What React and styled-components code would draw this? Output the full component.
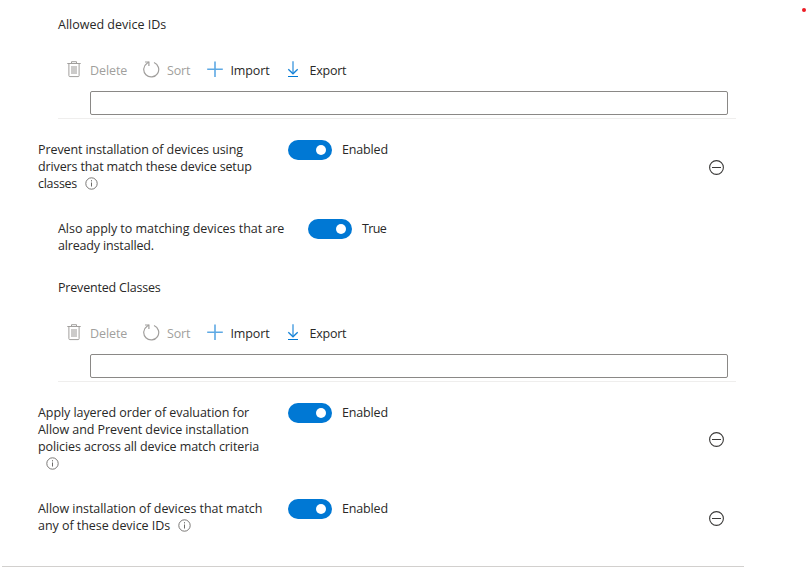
import React from 'react';
import styled, { createGlobalStyle } from 'styled-components';

const GlobalStyle = createGlobalStyle`
  * { box-sizing: border-box; }
  body { margin: 0; background: #fff; overflow: hidden; }
`;

const Page = styled.main`
  position: relative;
  width: 807px;
  height: 574px;
  padding-top: 16px;
  overflow: hidden;
  background: #fff;
  color: #292827;
  font-family: 'Open Sans', 'Noto Sans', sans-serif;
  font-size: 12.5px;
  line-height: 17px;
`;

const Panel = styled.div`
  display: flex;
  flex-direction: column;
  width: 744px;
`;

const ListSection = styled.section`
  width: 678px;
  height: 103px;
  margin-top: ${(p) => p.$gap || 0}px;
  margin-left: 58px;
  border-bottom: 1px solid #efeeed;
`;

const Line = styled.span`
  display: block;
  height: 17px;
  white-space: nowrap;
  letter-spacing: ${(p) => p.$track || 0}px;
`;

const Toolbar = styled.div`
  display: flex;
  align-items: center;
  height: 20px;
  margin-top: 27px;
  padding-left: 7px;
`;

const Command = styled.button`
  display: flex;
  align-items: center;
  width: ${(p) => p.$width}px;
  height: 20px;
  padding: 0;
  border: 0;
  background: none;
  font: inherit;
  color: ${(p) => (p.disabled ? '#a19f9d' : '#292827')};
`;

const CommandIcon = styled.span`
  display: flex;
  flex: none;
  width: ${(p) => p.$width}px;
  height: 18px;
`;

const ListInput = styled.input`
  display: block;
  width: 638px;
  height: 24px;
  margin: 11px 0 0 32px;
  border: 1px solid #8a8886;
  border-radius: 2px;
  outline: 0;
`;

const SettingRow = styled.div`
  display: flex;
  width: 736px;
  height: ${(p) => p.$height}px;
  margin-top: ${(p) => p.$gap}px;
  padding-left: ${(p) => (p.$nested ? 58 : 38)}px;
`;

const Label = styled.div`
  flex: none;
  width: 250px;
  padding-top: 1px;
`;

const InfoSvg = styled.svg`
  display: inline-block;
  width: 13px;
  height: 13px;
  margin-left: 8px;
  vertical-align: -2px;
`;

const Switch = styled.button`
  display: flex;
  align-items: center;
  justify-content: flex-end;
  flex: none;
  width: 44px;
  height: 20px;
  padding: 0 6px 0 0;
  border: 0;
  border-radius: 10px;
  background: #0078d4;
`;

const Knob = styled.span`
  width: 10px;
  height: 10px;
  border-radius: 50%;
  background: #fff;
`;

const State = styled.div`
  margin-left: 10px;
  padding-top: 1px;
`;

const RemoveButton = styled.button`
  display: flex;
  align-self: center;
  width: 17px;
  height: 17px;
  margin: 0 11px 0 auto;
  padding: 0;
  border: 0;
  background: none;
`;

const Rule = styled.hr`
  width: 742px;
  height: 1px;
  margin: 29px 0 0 2px;
  border: 0;
  background: #d2d0ce;
`;

const Marker = styled.span`
  position: absolute;
  top: 8px;
  left: 802px;
  width: 4px;
  height: 4px;
  border-radius: 50%;
  background: #ed1c24;
`;

const TrashIcon = () => (
  <svg width="18" height="18" viewBox="0 0 18 18" fill="none" stroke="#a19f9d">
    <path d="M2.3 2.5h13.4M6.5 2.5V.7h5v1.8" />
    <path d="M3.9 3v11.7c0 .6.3.9.9.9h8.4c.6 0 .9-.3.9-.9V3" />
    <path d="M6 5h6v8H6z" fill="#cccbca" stroke="none" />
  </svg>
);

const SortIcon = () => (
  <svg width="18" height="18" viewBox="0 0 18 18" fill="none" stroke="#a19f9d" strokeWidth="1.2">
    <path d="M12 1.5A7.5 7.5 0 1 1 5.1 2.2L6.9 1.1" />
    <path d="M3 1h3.9v3.9" />
  </svg>
);

const PlusIcon = () => (
  <svg width="18" height="18" viewBox="0 0 18 18" fill="none" stroke="#5ea9e4" strokeWidth="1.6">
    <path d="M8 .5v15.5M.2 8.2h15.6" />
  </svg>
);

const ExportIcon = () => (
  <svg width="14" height="18" viewBox="0 0 14 18" fill="none">
    <path d="M7 .2v12.3" stroke="#5ea9e4" strokeWidth="1.6" />
    <path d="M2.3 8.2L7 12.8l4.7-4.6" stroke="#1683d8" strokeWidth="1.3" />
    <path d="M2 15.5h10" stroke="#0078d4" />
  </svg>
);

const InfoIcon = () => (
  <InfoSvg viewBox="0 0 13 13" fill="none" stroke="#6b6967">
    <circle cx="6.5" cy="6.5" r="5.7" strokeWidth=".9" />
    <path d="M6.5 5.5v4M6.5 3.2v1.2" />
  </InfoSvg>
);

const Remove = () => (
  <RemoveButton aria-label="Remove setting">
    <svg width="17" height="17" viewBox="0 0 17 17" fill="none" stroke="#3b3a39">
      <circle cx="8.5" cy="8.5" r="6.9" strokeWidth="1.1" />
      <path d="M4 8.5h9" />
    </svg>
  </RemoveButton>
);

const DeviceList = ({ title, track, gap }) => (
  <ListSection $gap={gap}>
    <Line $track={track}>{title}</Line>
    <Toolbar>
      <Command disabled $width={77}>
        <CommandIcon $width={25}><TrashIcon /></CommandIcon>
        <Line $track={-0.08}>Delete</Line>
      </Command>
      <Command disabled $width={65}>
        <CommandIcon $width={25}><SortIcon /></CommandIcon>
        <Line $track={-0.2}>Sort</Line>
      </Command>
      <Command $width={79}>
        <CommandIcon $width={23.5}><PlusIcon /></CommandIcon>
        <Line $track={-0.12}>Import</Line>
      </Command>
      <Command $width={65}>
        <CommandIcon $width={23.5}><ExportIcon /></CommandIcon>
        <Line $track={-0.25}>Export</Line>
      </Command>
    </Toolbar>
    <ListInput aria-label={title} />
  </ListSection>
);

const Setting = ({ lines, info, state, nested, height, gap }) => (
  <SettingRow $height={height} $gap={gap} $nested={nested}>
    <Label>
      {lines.map(([text, track], i) => (
        <Line key={i} $track={track}>
          {text}
          {info && i === lines.length - 1 && <InfoIcon />}
        </Line>
      ))}
    </Label>
    <Switch role="switch" aria-checked="true" aria-label={lines[0][0]}><Knob /></Switch>
    <State><Line $track={state === 'True' ? -0.6 : -0.15}>{state}</Line></State>
    {!nested && <Remove />}
  </SettingRow>
);

export default function App() {
  return (
    <Page>
      <GlobalStyle />
      <Panel>
        <DeviceList title="Allowed device IDs" />
        <Setting
          info
          height={55}
          gap={21}
          state="Enabled"
          lines={[
            ['Prevent installation of devices using', -0.09],
            ['drivers that match these device setup', -0.13],
            ['classes', -0.28],
          ]}
        />
        <Setting
          nested
          height={35}
          gap={24}
          state="True"
          lines={[['Also apply to matching devices that are', -0.03], ['already installed.', -0.16]]}
        />
        <DeviceList title="Prevented Classes" track={-0.19} gap={25} />
        <Setting
          info
          height={73}
          gap={21}
          state="Enabled"
          lines={[
            ['Apply layered order of evaluation for', -0.07],
            ['Allow and Prevent device installation', -0.06],
            ['policies across all device match criteria', -0.1],
            ['', 0],
          ]}
        />
        <Setting
          info
          height={38}
          gap={23}
          state="Enabled"
          lines={[['Allow installation of devices that match', -0.06], ['any of these device IDs', -0.05]]}
        />
        <Rule />
      </Panel>
      <Marker />
    </Page>
  );
}
